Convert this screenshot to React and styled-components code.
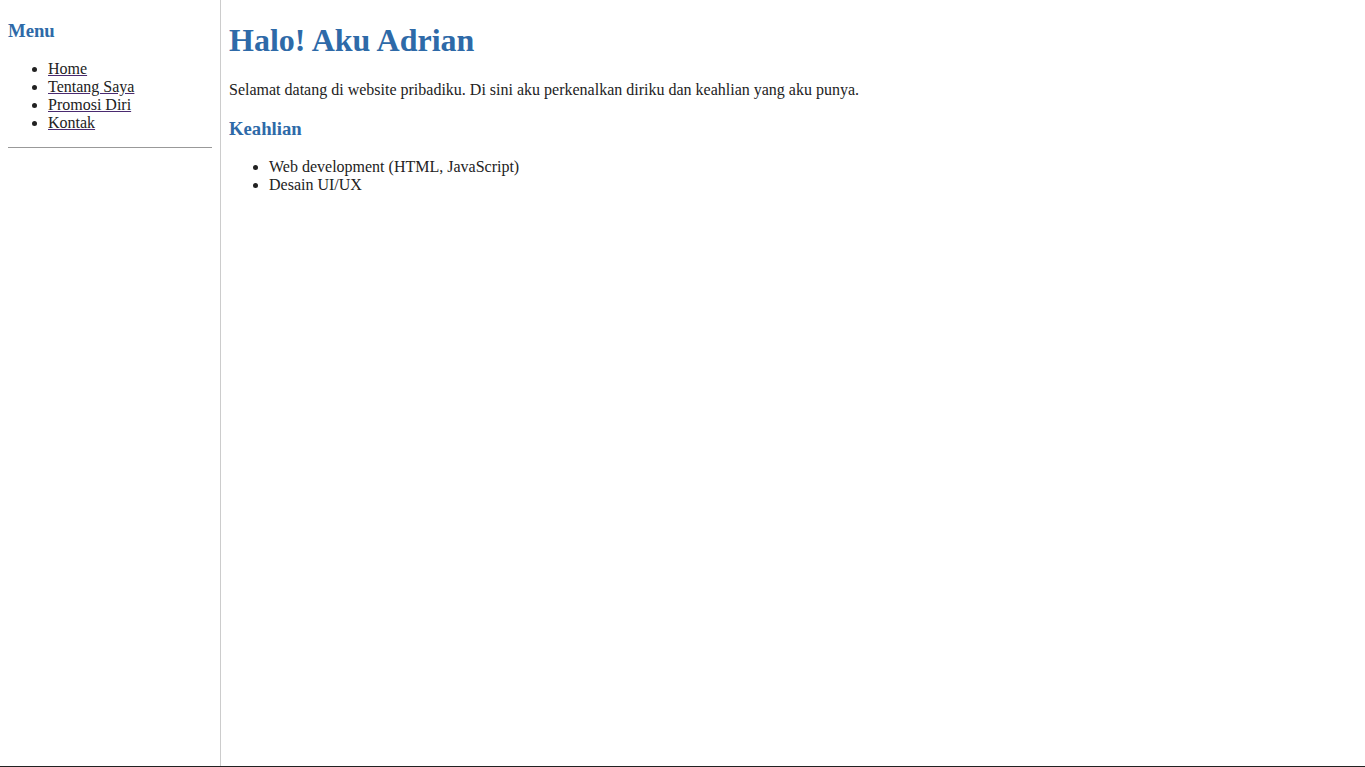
import styled, { createGlobalStyle } from "styled-components";

const GlobalStyle = createGlobalStyle`
  html, body {
    margin: 0;
    padding: 0;
    background: #fff;
  }
  body {
    font-family: "Liberation Serif", "Times New Roman", serif;
    font-size: 16px;
    color: #222;
  }
`;

const menuItems = ["Home", "Tentang Saya", "Promosi Diri", "Kontak"];
const skills = ["Web development (HTML, JavaScript)", "Desain UI/UX"];

const App = () => {
  return (
    <>
      <GlobalStyle />
      <Layout>
        <Sidebar>
          <SideTitle>Menu</SideTitle>
          <MenuList>
            {menuItems.map((item) => (
              <li key={item}>
                <MenuLink href="#">{item}</MenuLink>
              </li>
            ))}
          </MenuList>
          <Divider />
        </Sidebar>
        <Main>
          <Title>Halo! Aku Adrian</Title>
          <Intro>
            Selamat datang di website pribadiku. Di sini aku perkenalkan diriku
            dan keahlian yang aku punya.
          </Intro>
          <SectionTitle>Keahlian</SectionTitle>
          <SkillList>
            {skills.map((skill) => (
              <li key={skill}>{skill}</li>
            ))}
          </SkillList>
        </Main>
      </Layout>
    </>
  );
};

const Layout = styled.div`
  display: flex;
  height: 766px;
  border-bottom: 1px solid #222;
`;

const Sidebar = styled.nav`
  width: 204px;
  flex-shrink: 0;
  padding: 1px 8px 0;
  border-right: 1px solid #ccc;
`;

const Main = styled.main`
  flex: 1;
  padding: 1px 8px 0;
`;

const SideTitle = styled.h3`
  font-size: 18.72px;
  margin: 18.72px 0;
  color: #2e6aa8;
`;

const MenuList = styled.ul`
  margin: 16px 0 0;
  padding-left: 40px;
`;

const MenuLink = styled.a`
  color: #222;
  text-decoration: underline;
  text-decoration-color: #4a2a70;
`;

const Divider = styled.hr`
  margin: 15px 0 0;
  border: none;
  border-top: 1px solid #999;
  height: 0;
`;

const Title = styled.h1`
  font-size: 32px;
  margin: 21.44px 0;
  color: #2e6aa8;
`;

const Intro = styled.p`
  margin: 16px 0;
`;

const SectionTitle = styled.h3`
  font-size: 18.72px;
  margin: 18.72px 0;
  color: #2e6aa8;
`;

const SkillList = styled.ul`
  margin: 16px 0;
  padding-left: 40px;
`;

export default App;
